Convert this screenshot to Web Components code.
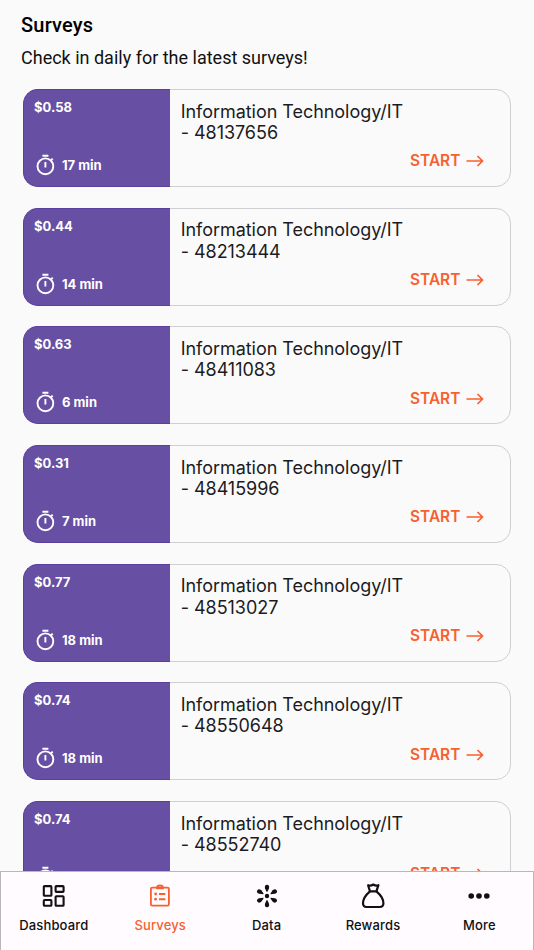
<!DOCTYPE html>
<html lang="en">
<head>
<meta charset="utf-8">
<title>Surveys</title>
<style>
    html, body {
        margin: 0;
        height: 100%;
        overflow: hidden;
        background: #fafafa;
    }
</style>
</head>
<body>
<survey-app>
    <page-header slot="header" heading="Surveys">Check in daily for the latest surveys!</page-header>
    <survey-card price="$0.58" time="17 min">Information Technology/IT - 48137656</survey-card>
    <survey-card price="$0.44" time="14 min">Information Technology/IT - 48213444</survey-card>
    <survey-card price="$0.63" time="6 min">Information Technology/IT - 48411083</survey-card>
    <survey-card price="$0.31" time="7 min">Information Technology/IT - 48415996</survey-card>
    <survey-card price="$0.77" time="18 min">Information Technology/IT - 48513027</survey-card>
    <survey-card price="$0.74" time="18 min">Information Technology/IT - 48550648</survey-card>
    <survey-card price="$0.74" time="18 min">Information Technology/IT - 48552740</survey-card>
    <tab-bar slot="footer">
        <tab-item icon="dashboard">Dashboard</tab-item>
        <tab-item icon="surveys" active>Surveys</tab-item>
        <tab-item icon="data">Data</tab-item>
        <tab-item icon="rewards">Rewards</tab-item>
        <tab-item icon="more">More</tab-item>
    </tab-bar>
</survey-app>

<script>
// 24x24 icons for the bottom tabs
const ICONS = {
    dashboard: `<g fill="none" stroke="currentColor" stroke-width="2.1">
        <rect x="1.8" y="2.1" width="7.6" height="9.6" rx=".8"/><rect x="13.6" y="2.1" width="8" height="5.8" rx=".8"/>
        <rect x="1.8" y="16" width="7.6" height="5.8" rx=".8"/><rect x="13.6" y="12.2" width="8" height="9.6" rx=".8"/></g>`,
    surveys: `<g fill="none" stroke="currentColor" stroke-width="1.8">
        <rect x="2.9" y="3.6" width="18" height="18" rx="1.3"/><path d="M8.2 4.2h7.6M9.2 3.6a2.8 2.2 0 0 1 5.6 0" stroke-width="2"/>
        <path d="M11 10h6.4M11 15.2h6.4" stroke-width="2"/></g>
        <circle cx="7.6" cy="10" r="1.4" fill="currentColor"/><circle cx="7.6" cy="15.2" r="1.4" fill="currentColor"/>`,
    data: `<defs><path id="arm" d="M11.5 7.8L10 4.2Q9.3 .9 12 .8Q14.7 .9 14 4.2L12.5 7.8Z"/></defs>
        <g fill="currentColor"><circle cx="12" cy="12" r="2.2"/><use href="#arm"/>
        <use href="#arm" transform="rotate(60 12 12)"/><use href="#arm" transform="rotate(120 12 12)"/>
        <use href="#arm" transform="rotate(180 12 12)"/><use href="#arm" transform="rotate(240 12 12)"/>
        <use href="#arm" transform="rotate(300 12 12)"/></g>`,
    rewards: `<g fill="none" stroke="currentColor" stroke-width="2.2" stroke-linejoin="round">
        <path d="M9 7.4L7.1 1.2Q9.6 2.4 12.3 .5Q15 2.4 17.4 1.2L15.4 7.4Z"/>
        <path d="M9 7.4C5.2 10.6 2 15 2 19.3C2 22 3.2 23 5.6 23H18.8C21.2 23 22.4 22 22.4 19.3C22.4 15 19.2 10.6 15.4 7.4"/></g>`,
    more: `<g fill="currentColor"><circle cx="4.2" cy="12" r="2.8"/><circle cx="12" cy="12" r="2.8"/><circle cx="19.8" cy="12" r="2.8"/></g>`
};

class SurveyApp extends HTMLElement {
    constructor() {
        super();
        this.attachShadow({ mode: 'open' }).innerHTML = `
            <style>
                :host {
                    display: flex;
                    flex-direction: column;
                    height: 100vh;
                    font-family: Inter, sans-serif;
                    color: #1c1b1f;
                }
                main {
                    flex: 1;
                    min-height: 0;
                    overflow: hidden;
                }
                .list {
                    display: flex;
                    flex-direction: column;
                    gap: 20.7px;
                    padding: 0 23.4px;
                }
            </style>
            <main>
                <slot name="header"></slot>
                <div class="list"><slot></slot></div>
            </main>
            <slot name="footer"></slot>
        `;
    }
}

class PageHeader extends HTMLElement {
    constructor() {
        super();
        this.attachShadow({ mode: 'open' }).innerHTML = `
            <style>
                :host {
                    display: block;
                    box-sizing: border-box;
                    height: 89px;
                    padding: 10px 21px 0;
                    font-family: Roboto, sans-serif;
                    color: #111;
                }
                h1 {
                    margin: 0 0 5px;
                    font-size: 20px;
                    font-weight: 500;
                    line-height: 30px;
                    letter-spacing: .2px;
                    color: #000;
                }
                p {
                    margin: 0;
                    font-size: 18px;
                    line-height: 26px;
                }
            </style>
            <h1>${this.getAttribute('heading')}</h1>
            <p><slot></slot></p>
        `;
    }
}

class SurveyCard extends HTMLElement {
    constructor() {
        super();
        this.attachShadow({ mode: 'open' }).innerHTML = `
            <style>
                :host {
                    display: flex;
                    flex: none;
                    box-sizing: border-box;
                    height: 98px;
                    border: 1px solid #cfcfd1;
                    border-radius: 15px;
                    background: #fafafa;
                }
                .side {
                    display: flex;
                    flex-direction: column;
                    justify-content: space-between;
                    box-sizing: border-box;
                    width: 147px;
                    margin: -1px 0 -1px -1px;
                    padding: 9px 9.6px 11px;
                    border: 1px solid #5b3f9c;
                    border-right: 0;
                    border-radius: 15px 0 0 15px;
                    background: #674fa3;
                    color: #fff;
                    font-size: 13px;
                    font-weight: 700;
                    line-height: 16px;
                }
                .time {
                    display: flex;
                    align-items: center;
                    gap: 6px;
                    height: 20px;
                }
                .time svg {
                    width: 22px;
                    height: 22px;
                }
                .body {
                    flex: 1;
                    display: flex;
                    flex-direction: column;
                    justify-content: space-between;
                    padding: 10.5px 25.3px 14.6px 10.3px;
                }
                .title {
                    width: 226px;
                    font-size: 18px;
                    line-height: 21.4px;
                    letter-spacing: -.04px;
                }
                .start {
                    display: flex;
                    align-self: flex-end;
                    align-items: center;
                    gap: 6px;
                    color: #f7602f;
                    font-size: 15.4px;
                    font-weight: 600;
                    line-height: 20px;
                }
            </style>
            <div class="side">
                <span>${this.getAttribute('price')}</span>
                <div class="time">
                    <svg viewBox="0 0 22 22" fill="none" stroke="#fff" stroke-width="1.9">
                        <circle cx="11.4" cy="12.3" r="7.9"/>
                        <path d="M8.4 1.8h6M11.4 8v5.4M16.8 6.5l1.9-1.9"/>
                    </svg>
                    <span>${this.getAttribute('time')}</span>
                </div>
            </div>
            <div class="body">
                <div class="title"><slot></slot></div>
                <div class="start">
                    <span>START</span>
                    <svg width="18" height="12" viewBox="0 0 18 12" fill="none" stroke="currentColor" stroke-width="1.7">
                        <path d="M.5 6h16M11.5 1l5 5l-5 5"/>
                    </svg>
                </div>
            </div>
        `;
    }
}

class TabBar extends HTMLElement {
    constructor() {
        super();
        this.attachShadow({ mode: 'open' }).innerHTML = `
            <style>
                :host {
                    display: grid;
                    grid-template-columns: repeat(5, 1fr);
                    box-sizing: border-box;
                    height: 79px;
                    border: 1px solid #b9b6bd;
                    border-bottom: 0;
                    background: #fffbff;
                }
            </style>
            <slot></slot>
        `;
    }
}

class TabItem extends HTMLElement {
    constructor() {
        super();
        this.attachShadow({ mode: 'open' }).innerHTML = `
            <style>
                :host {
                    display: flex;
                    flex-direction: column;
                    align-items: center;
                    gap: 9px;
                    margin: 0 .4px 0 -.4px;
                    padding-top: 12px;
                    color: #111;
                    font-size: 13px;
                    font-weight: 500;
                    line-height: 16px;
                    letter-spacing: .15px;
                }
                :host([active]) {
                    color: #f7602f;
                }
                svg {
                    width: 24px;
                    height: 24px;
                    overflow: visible;
                }
            </style>
            <svg viewBox="0 0 24 24">${ICONS[this.getAttribute('icon')]}</svg>
            <span><slot></slot></span>
        `;
    }
}

customElements.define('survey-app', SurveyApp);
customElements.define('page-header', PageHeader);
customElements.define('survey-card', SurveyCard);
customElements.define('tab-bar', TabBar);
customElements.define('tab-item', TabItem);
</script>
</body>
</html>
